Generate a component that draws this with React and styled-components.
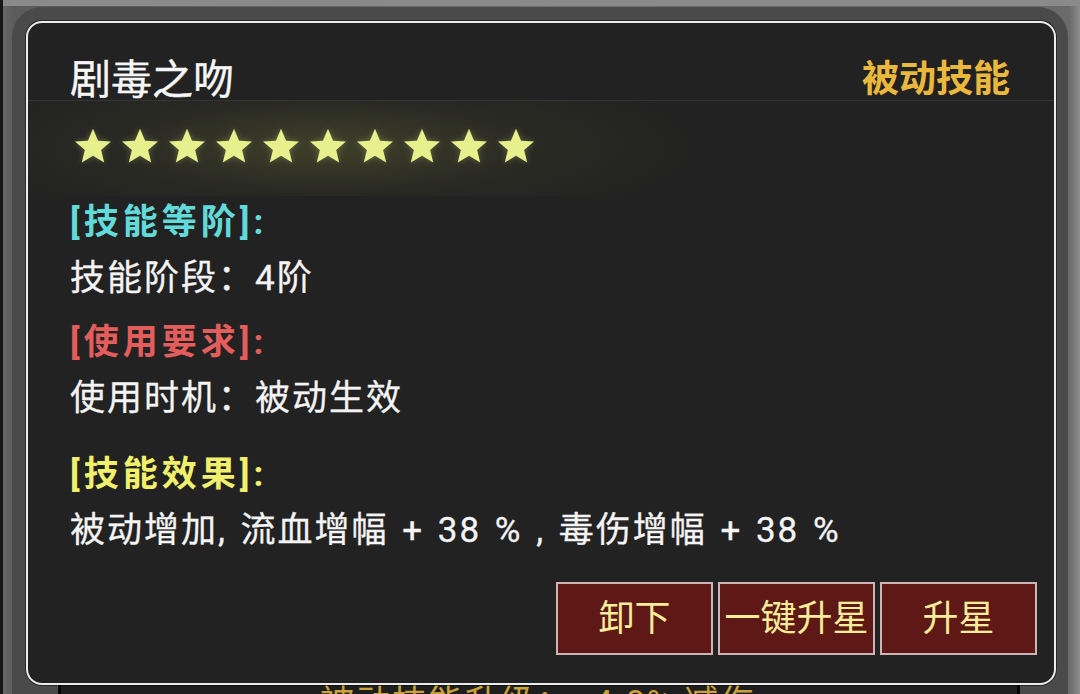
import React from "react";
import styled, { createGlobalStyle } from "styled-components";

const GlobalStyle = createGlobalStyle`
  * { box-sizing: border-box; }
  html, body {
    margin: 0;
    padding: 0;
    width: 1080px;
    height: 694px;
    overflow: hidden;
    background: #7a7a7a;
  }
`;

const FONT = `Roboto, "Noto Sans CJK SC", sans-serif`;

/* ---------- background screen (list page under the modal) ---------- */

const Screen = styled.div`
  position: relative;
  width: 1080px;
  height: 694px;
  padding: 7px 12px 0 9px;
  border-left: 3px solid #161616;
  background:
    linear-gradient(180deg, #8a8a8a 0, #8a8a8a 6px, rgba(0, 0, 0, 0) 6px),
    linear-gradient(90deg, #666 0%, #5c5c5c 1%, #6e6e6e 50%, #6a6a6a 99%, #8c8c8c 100%);
  font-family: ${FONT};
`;

const Panel = styled.div`
  height: 100%;
  padding: 50px 48px 0 46px;
  border-radius: 30px 30px 0 0;
  background: #4a4a4a;
`;

const ListArea = styled.div`
  height: 100%;
  overflow: hidden;
  display: flex;
  flex-direction: column;
  align-items: center;
  padding-top: 625px;
  border-left: 3px solid #050505;
  border-right: 3px solid #050505;
  background: #1e1e1e;
`;

const UpgradeNote = styled.div`
  font-size: 34px;
  line-height: 40px;
  letter-spacing: 2px;
  color: #c9a23c;
  white-space: nowrap;
`;

/* ---------- skill detail modal ---------- */

const Modal = styled.div`
  position: absolute;
  left: 23px;
  top: 21px;
  width: 1030px;
  height: 664px;
  display: flex;
  flex-direction: column;
  border: 2px solid #ececec;
  border-radius: 16px;
  background: #222222;
  box-shadow: 0 0 0 1px rgba(0, 0, 0, 0.45);
  overflow: hidden;
`;

const Header = styled.div`
  display: flex;
  justify-content: space-between;
  align-items: flex-end;
  padding: 37px 44px 0 42px;
  border-bottom: 1px solid #353535;
`;

const Title = styled.div`
  font-size: 41px;
  line-height: 40px;
  color: #f6f6f6;
  -webkit-text-stroke: 0.4px #f6f6f6;
`;

const Tag = styled.div`
  font-size: 37px;
  line-height: 40px;
  color: #ebb83e;
  font-weight: 700;
`;

const StarBand = styled.div`
  display: flex;
  gap: 7px;
  padding: 25px 42px 30px 45px;
  background: radial-gradient(
    ellipse 380px 85px at 300px 48%,
    rgba(82, 84, 46, 0.6) 0%,
    rgba(52, 53, 37, 0.38) 55%,
    rgba(34, 34, 34, 0) 100%
  );
`;

const StarIcon = styled.svg`
  width: 40px;
  height: 40px;
  flex: none;
  filter: drop-shadow(0 0 3px rgba(230, 240, 140, 0.3));
`;

const Body = styled.div`
  display: flex;
  flex-direction: column;
  padding: 0 44px 0 42px;
  font-size: 35px;
  letter-spacing: 2px;
  word-spacing: 3px;
  line-height: 54px;
  white-space: nowrap;
`;

const Section = styled.section`
  margin-top: ${(p) => p.$space}px;
`;

const Heading = styled.div`
  color: ${(p) => p.$tone};
  font-weight: 700;
  letter-spacing: 4px;
`;

const Line = styled.div`
  margin-top: 2px;
  color: #f4f4f4;
  -webkit-text-stroke: 0.3px #f4f4f4;
`;

const Actions = styled.div`
  display: flex;
  justify-content: flex-end;
  gap: 5px;
  margin-top: auto;
  padding: 0 17px 28px 0;
`;

const ActionButton = styled.button`
  width: 157px;
  height: 73px;
  padding: 0;
  border: 2px solid #cbb5b5;
  background: #5e1815;
  color: #f7ec9a;
  font-family: ${FONT};
  font-size: 36px;
  line-height: 1;
  cursor: pointer;
`;

const Star = () => (
  <StarIcon viewBox="0 0 24 24">
    <path
      d="M12 1.6l3.05 7.2 7.75.55-5.93 5.03 1.86 7.57L12 17.8l-6.73 4.15 1.86-7.57L1.2 9.35l7.75-.55z"
      fill="#e7f08c"
    />
  </StarIcon>
);

const sections = [
  { heading: "[技能等阶]:", tone: "#62dada", line: "技能阶段：4阶", space: 0 },
  { heading: "[使用要求]:", tone: "#e45d5d", line: "使用时机：被动生效", space: 10 },
  {
    heading: "[技能效果]:",
    tone: "#f1f06c",
    line: "被动增加, 流血增幅 + 38 % , 毒伤增幅 + 38 %",
    space: 22,
  },
];

export default function App() {
  return (
    <>
      <GlobalStyle />
      <Screen>
        <Panel>
          <ListArea>
            <UpgradeNote>{"<<< 被动技能升级：+4.8% 减伤 >>>"}</UpgradeNote>
          </ListArea>
        </Panel>

        <Modal>
          <Header>
            <Title>剧毒之吻</Title>
            <Tag>被动技能</Tag>
          </Header>

          <StarBand>
            {Array.from({ length: 10 }, (_, i) => (
              <Star key={i} />
            ))}
          </StarBand>

          <Body>
            {sections.map((s) => (
              <Section key={s.heading} $space={s.space}>
                <Heading $tone={s.tone}>{s.heading}</Heading>
                <Line>{s.line}</Line>
              </Section>
            ))}
          </Body>

          <Actions>
            <ActionButton>卸下</ActionButton>
            <ActionButton>一键升星</ActionButton>
            <ActionButton>升星</ActionButton>
          </Actions>
        </Modal>
      </Screen>
    </>
  );
}
